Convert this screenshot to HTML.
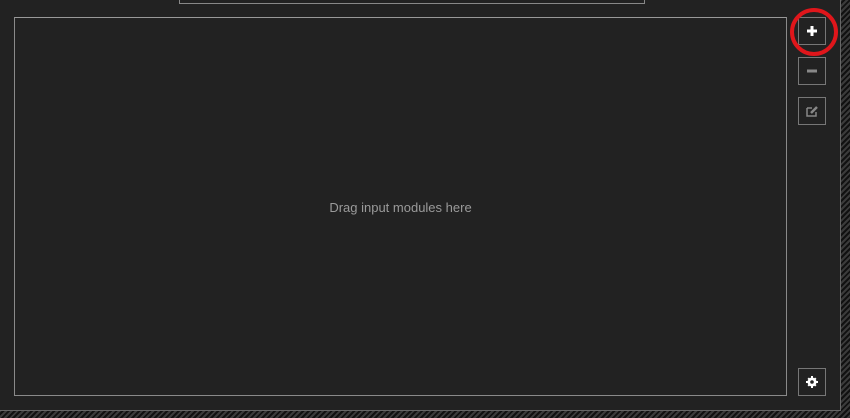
<!DOCTYPE html>
<html><head><style>
body{margin:0;width:850px;height:418px;overflow:hidden;position:relative;font-family:"Liberation Sans",sans-serif;
background:repeating-linear-gradient(135deg,#111 0 2px,#3a3a3a 2px 4px);}
.frame{position:absolute;left:0;top:0;width:840px;height:410px;background:#222;border-right:1px solid #666;border-bottom:1px solid #666;}
.top{position:absolute;left:179px;top:-2px;width:464px;height:5px;border:1px solid #888;border-top:none;}
.main{position:absolute;left:14px;top:17px;width:771px;height:377px;border:1px solid #8a8a8a;border-top-color:#999;}
.txt{position:absolute;left:0;right:0;top:182px;text-align:center;color:#9a9a9a;font-size:13px;}
.btn{position:absolute;left:798px;width:26px;height:26px;border:1px solid #777;}
</style></head><body>
<div class="frame"></div>
<div class="top"></div>
<div class="main"><div class="txt">Drag input modules here</div></div>
<div class="btn" style="top:17px"><svg width="26" height="26"><path d="M13 8v10M8 13h10" stroke="#fff" stroke-width="3"/></svg></div>
<div class="btn" style="top:57px"><svg width="26" height="26"><path d="M8 13h10" stroke="#888" stroke-width="3"/></svg></div>
<div class="btn" style="top:97px"><svg width="26" height="26"><path d="M8 10h5M8 10v8h9v-4" stroke="#888" stroke-width="1.5" fill="none"/><path d="M12 15l6-6" stroke="#888" stroke-width="2.5"/></svg></div>
<div class="btn" style="top:368px"><svg width="26" height="26"><g fill="#fff"><circle cx="13" cy="13" r="4.5"/><path d="M12 7h2v12h-2zM7 12h12v2H7z"/><path d="M8.5 9.9l1.4-1.4 7.6 7.6-1.4 1.4zM16.1 8.5l1.4 1.4-7.6 7.6-1.4-1.4z"/></g><circle cx="13" cy="13" r="1.8" fill="#222"/></svg></div>
<svg style="position:absolute;left:785px;top:5px" width="56" height="56"><circle cx="29" cy="27" r="22" fill="none" stroke="#e0161b" stroke-width="4"/></svg>
</body></html>
